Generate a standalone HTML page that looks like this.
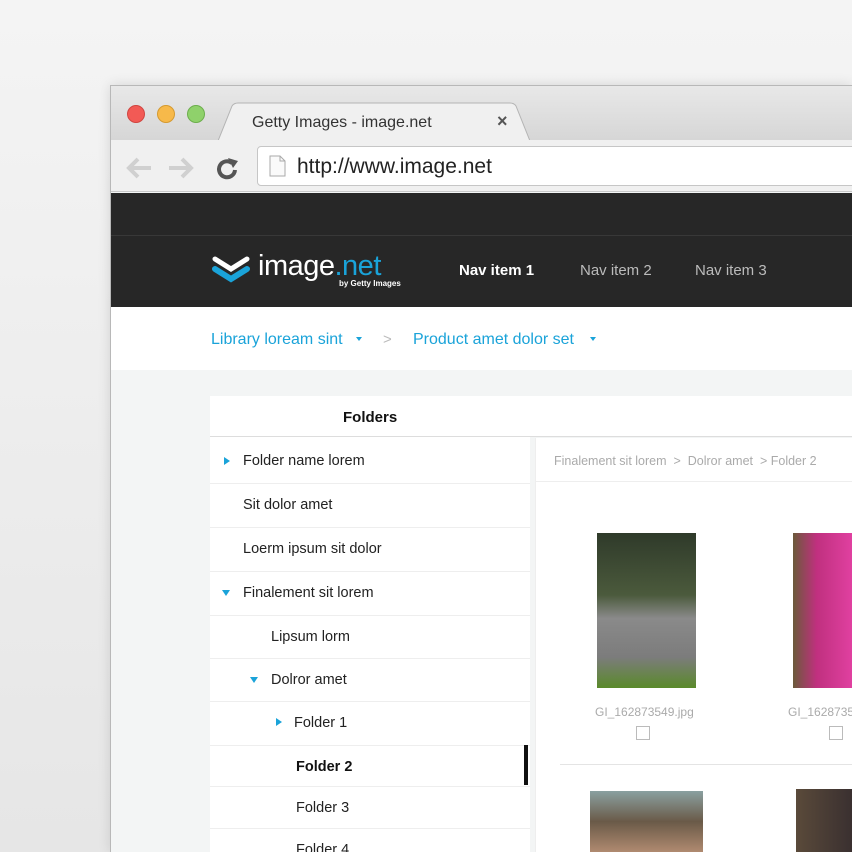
<!DOCTYPE html>
<html style="overflow:hidden;width:852px;height:852px"><head><style>
*{margin:0;padding:0;box-sizing:border-box}
body{width:852px;height:852px;overflow:hidden;background:linear-gradient(#f4f4f4,#e6e6e6);font-family:"Liberation Sans",sans-serif;position:relative}
.a{position:absolute}
.win{left:110px;top:85px;width:742px;height:767px;background:#f3f5f5;border-left:1px solid #b8b8b8;border-top:1px solid #b8b8b8;box-shadow:0 0 12px rgba(0,0,0,.12)}
.row{position:absolute;left:210px;width:320px;height:43px;border-top:1px solid #eee;font-size:14.5px;color:#222;line-height:43px;background:#fff}
.tri{position:absolute;width:0;height:0}
.tr{border-left:6px solid #1aa3d9;border-top:4px solid transparent;border-bottom:4px solid transparent}
.td{border-top:6px solid #1aa3d9;border-left:4px solid transparent;border-right:4px solid transparent}
</style></head><body>
<div class="a win"></div>
<div class="a" style="left:111px;top:86px;width:741px;height:54px;background:linear-gradient(#e8e8e8,#d6d6d6)"></div>
<div class="a" style="left:127px;top:105px;width:18px;height:18px;border-radius:50%;background:#f25a55;border:1px solid #d04540"></div>
<div class="a" style="left:157px;top:105px;width:18px;height:18px;border-radius:50%;background:#f7b94a;border:1px solid #d59a30"></div>
<div class="a" style="left:187px;top:105px;width:18px;height:18px;border-radius:50%;background:#8fd16b;border:1px solid #6cae4c"></div>
<svg class="a" style="left:218px;top:102px" width="314" height="40"><path d="M0 39 L14 4 Q16 1 20 1 L292 1 Q296 1 298 4 L312 39" fill="#f0f0f0" stroke="#b4b4b4"/></svg>
<div class="a" style="left:252px;top:114px;font-size:16px;color:#333">Getty Images - image.net</div>
<div class="a" style="left:497px;top:111px;font-size:18px;color:#555;font-weight:bold">×</div>
<div class="a" style="left:111px;top:140px;width:741px;height:52px;background:#f0f0f0;border-bottom:1px solid #c8c8c8"></div>
<svg class="a" style="left:125px;top:155px" width="120" height="26"><g stroke="#d0d0d0" stroke-width="4" fill="none"><path d="M26 13H4M13 4L4 13L13 22"/><path d="M44 13H66M57 4L66 13L57 22"/></g><path d="M107 8A8 8 0 1 0 110 15" stroke="#555" stroke-width="4" fill="none"/><path d="M103 3L113 6L108 13Z" fill="#555"/></svg>
<div class="a" style="left:257px;top:146px;width:600px;height:40px;background:#fff;border:1px solid #c6c6c6;border-radius:4px"></div>
<svg class="a" style="left:269px;top:155px" width="18" height="22"><path d="M1 1H11L16 6V21H1Z" fill="#fafafa" stroke="#aaa"/><path d="M11 1V6H16" fill="none" stroke="#aaa"/></svg>
<div class="a" style="left:297px;top:155px;font-size:21px;color:#222">http://www.image.net</div>
<div class="a" style="left:111px;top:193px;width:741px;height:114px;background:#272727"></div>
<div class="a" style="left:111px;top:235px;width:741px;height:1px;background:#383838"></div>
<svg class="a" style="left:212px;top:255px" width="38" height="28"><path d="M3 4L19 14L35 4" stroke="#fff" stroke-width="5" fill="none" stroke-linecap="round"/><path d="M3 14L19 24L35 14" stroke="#1aa3d9" stroke-width="6" fill="none" stroke-linecap="round"/></svg>
<div class="a" style="left:258px;top:250px;font-size:29px;color:#fff;letter-spacing:-0.5px">image<span style="color:#1aa3d9">.net</span></div>
<div class="a" style="left:339px;top:279px;font-size:8px;color:#fff;font-weight:bold">by Getty Images</div>
<div class="a" style="left:459px;top:262px;font-size:15px;color:#fff;font-weight:bold">Nav item 1</div>
<div class="a" style="left:580px;top:262px;font-size:15px;color:#bbb">Nav item 2</div>
<div class="a" style="left:695px;top:262px;font-size:15px;color:#bbb">Nav item 3</div>
<div class="a" style="left:111px;top:307px;width:741px;height:63px;background:#fff"></div>
<div class="a" style="left:211px;top:331px;font-size:16px;color:#1aa3d9">Library loream sint</div>
<div class="tri td" style="left:356px;top:337px;border-top-width:4px;border-left-width:3px;border-right-width:3px"></div>
<div class="a" style="left:383px;top:331px;font-size:15px;color:#bbb">&gt;</div>
<div class="a" style="left:413px;top:331px;font-size:16px;color:#1aa3d9">Product amet dolor set</div>
<div class="tri td" style="left:590px;top:337px;border-top-width:4px;border-left-width:3px;border-right-width:3px"></div>
<div class="a" style="left:210px;top:396px;width:642px;height:41px;background:#fff;border-bottom:1px solid #ddd"></div>
<div class="a" style="left:343px;top:409px;font-size:15px;font-weight:bold;color:#111">Folders</div>
<div class="a" style="left:210px;top:437px;width:320px;height:420px;background:#fff"></div>
<div class="row" style="top:440px;padding-left:33px;border-top:none">Folder name lorem</div><div class="tri tr" style="left:224px;top:457px"></div>
<div class="row" style="top:483px;padding-left:33px">Sit dolor amet</div>
<div class="row" style="top:527px;padding-left:33px">Loerm ipsum sit dolor</div>
<div class="row" style="top:571px;padding-left:33px">Finalement sit lorem</div><div class="tri td" style="left:222px;top:590px"></div>
<div class="row" style="top:615px;padding-left:61px">Lipsum lorm</div>
<div class="row" style="top:658px;padding-left:61px">Dolror amet</div><div class="tri td" style="left:250px;top:677px"></div>
<div class="row" style="top:701px;padding-left:84px">Folder 1</div><div class="tri tr" style="left:276px;top:718px"></div>
<div class="row" style="top:745px;padding-left:86px;font-weight:bold;color:#111">Folder 2</div>
<div class="a" style="left:524px;top:745px;width:4px;height:40px;background:#111"></div>
<div class="row" style="top:786px;padding-left:86px">Folder 3</div>
<div class="row" style="top:828px;padding-left:86px">Folder 4</div>
<div class="a" style="left:535px;top:438px;width:317px;height:414px;background:#fff;border-left:1px solid #eee"></div>
<div class="a" style="left:535px;top:481px;width:317px;height:1px;background:#eee"></div>
<div class="a" style="left:554px;top:454px;font-size:12.5px;color:#aaa">Finalement sit lorem &nbsp;&gt;&nbsp; Dolror amet &nbsp;&gt; Folder 2</div>
<div class="a" style="left:597px;top:533px;width:99px;height:155px;background:linear-gradient(#2f3a2a,#4b5a3c 40%,#8a8a8a 55%,#7c7c7c 80%,#5a8a2a)"></div>
<div class="a" style="left:793px;top:533px;width:59px;height:155px;background:linear-gradient(90deg,#6b5a3a,#c0307f 40%,#e040a0)"></div>
<div class="a" style="left:595px;top:705px;font-size:12px;color:#aaa">GI_162873549.jpg</div>
<div class="a" style="left:788px;top:705px;font-size:12px;color:#aaa">GI_1628735</div>
<div class="a" style="left:636px;top:726px;width:14px;height:14px;border:1px solid #bbb"></div>
<div class="a" style="left:829px;top:726px;width:14px;height:14px;border:1px solid #bbb"></div>
<div class="a" style="left:560px;top:764px;width:292px;height:1px;background:#e4e4e4"></div>
<div class="a" style="left:590px;top:791px;width:113px;height:61px;background:linear-gradient(#8aa0a0,#6a5a48 50%,#b08a70)"></div>
<div class="a" style="left:796px;top:789px;width:56px;height:63px;background:linear-gradient(90deg,#5a4a3a,#3a3030)"></div>
</body></html>
